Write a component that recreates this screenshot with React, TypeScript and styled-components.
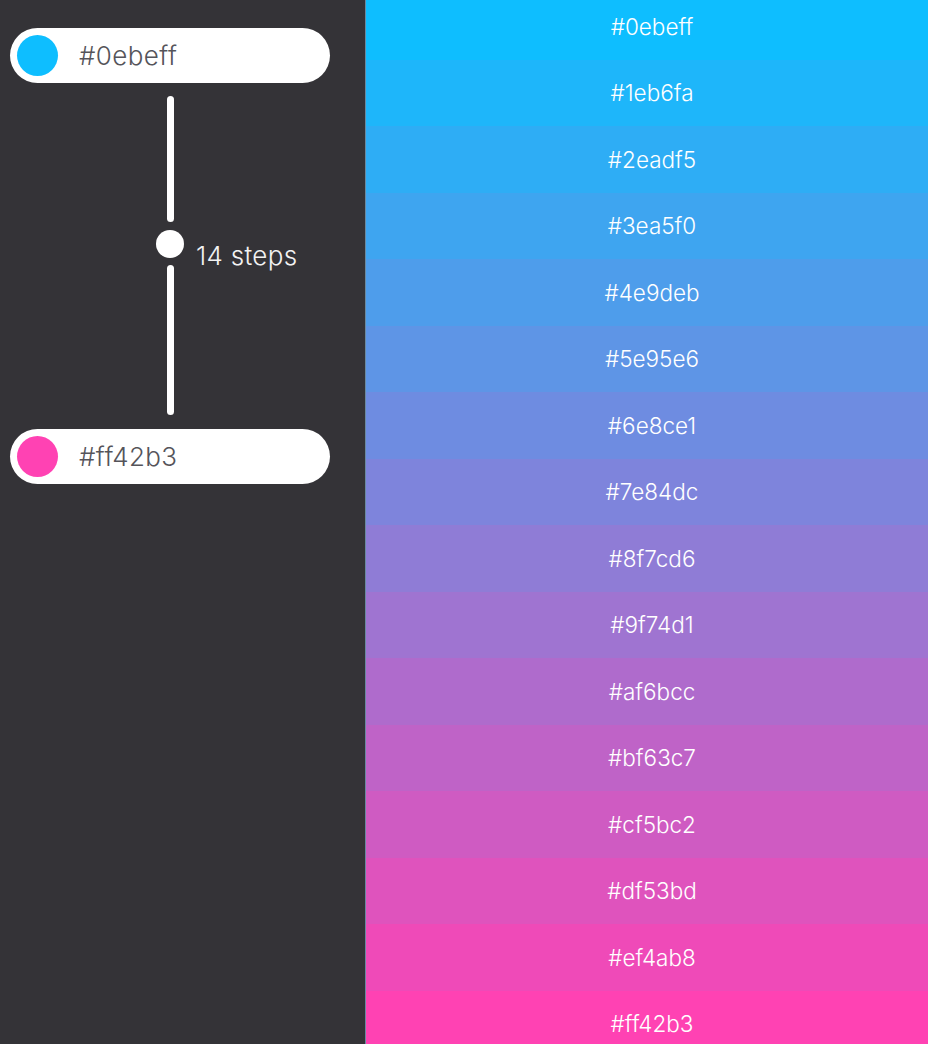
import React from "react";
import styled, { createGlobalStyle } from "styled-components";

const GlobalStyle = createGlobalStyle`
  html, body { margin: 0; padding: 0; }
  body { background: #343337; font-family: "Inter", "Lato", "Liberation Sans", sans-serif; }
`;

const START = "#0ebeff";
const END = "#ff42b3";
const STEPS = 14;

const hexToRgb = (h: string) => [1, 3, 5].map((i) => parseInt(h.slice(i, i + 2), 16));
const toHex = (n: number) => Math.round(n).toString(16).padStart(2, "0");

const buildScale = (a: string, b: string, steps: number) => {
  const ra = hexToRgb(a);
  const rb = hexToRgb(b);
  const total = steps + 2;
  return Array.from({ length: total }, (_, i) => {
    const t = i / (total - 1);
    return "#" + ra.map((v, k) => toHex(v + (rb[k] - v) * t)).join("");
  });
};

const Page = styled.div`
  display: flex;
  width: 928px;
  height: 1044px;
  overflow: hidden;
`;

const Controls = styled.aside`
  width: 365px;
  flex: none;
  box-sizing: border-box;
  padding: 28px 35px 0 10px;
  background: #343337;
  display: flex;
  flex-direction: column;
`;

const Pill = styled.div`
  height: 55px;
  border-radius: 28px;
  background: #ffffff;
  display: flex;
  align-items: center;
  padding: 0 7px;
  gap: 21px;
`;

const Dot = styled.span<{ $c: string }>`
  width: 41px;
  height: 41px;
  border-radius: 50%;
  background: ${(p) => p.$c};
  flex: none;
`;

const HexText = styled.span`
  font-size: 26px;
  font-weight: 300;
  color: #55545a;
  letter-spacing: 0.4px;
`;

const Slider = styled.div`
  margin: 13px 0 14px;
  display: flex;
  flex-direction: column;
  align-items: center;
`;

const Track = styled.div<{ $h: number }>`
  width: 7px;
  height: ${(p) => p.$h}px;
  border-radius: 4px;
  background: #ffffff;
`;

const KnobRow = styled.div`
  width: 100%;
  margin: 8px 0 7px;
  display: grid;
  grid-template-columns: 1fr 28px 1fr;
  column-gap: 12px;
  height: 28px;
`;

const Knob = styled.div`
  grid-column: 2;
  width: 28px;
  height: 28px;
  border-radius: 50%;
  background: #ffffff;
`;

const StepsLabel = styled.span`
  grid-column: 3;
  align-self: start;
  margin-top: 13px;
  font-size: 26px;
  font-weight: 300;
  color: #f2f2f2;
  white-space: nowrap;
  line-height: 26px;
  letter-spacing: 0.3px;
`;

const Swatches = styled.main`
  flex: 1;
  border-left: 1px solid #6a8aa0;
  box-sizing: border-box;
  display: flex;
  flex-direction: column;
  margin-top: -7px;
`;

const Swatch = styled.div<{ $c: string }>`
  height: 66.5px;
  flex: none;
  box-sizing: border-box;
  padding-left: 10px;
  background: ${(p) => p.$c};
  display: flex;
  align-items: center;
  justify-content: center;
  color: #ffffff;
  font-size: 22.5px;
  font-weight: 300;
`;

export default function App() {
  const scale = buildScale(START, END, STEPS);
  return (
    <>
      <GlobalStyle />
      <Page>
        <Controls>
          <Pill>
            <Dot $c={START} />
            <HexText>{START}</HexText>
          </Pill>
          <Slider>
            <Track $h={126} />
            <KnobRow>
              <Knob />
              <StepsLabel>{STEPS} steps</StepsLabel>
            </KnobRow>
            <Track $h={150} />
          </Slider>
          <Pill>
            <Dot $c={END} />
            <HexText>{END}</HexText>
          </Pill>
        </Controls>
        <Swatches>
          {scale.map((c) => (
            <Swatch key={c} $c={c}>
              {c}
            </Swatch>
          ))}
        </Swatches>
      </Page>
    </>
  );
}
